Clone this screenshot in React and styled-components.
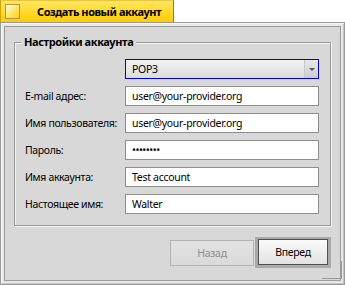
import React from 'react'
import styled, { createGlobalStyle } from 'styled-components'

const Global = createGlobalStyle`
  body {
    margin: 0;
    background: #ffffff;
    font-family: "Noto Sans", "DejaVu Sans", sans-serif;
  }
`

const Window = styled.div`
  position: relative;
  width: 345px;
  height: 285px;
  display: flex;
  flex-direction: column;
`

const TabBar = styled.div`
  height: 22px;
  display: flex;
`

const Tab = styled.div`
  width: 174px;
  box-sizing: border-box;
  display: flex;
  align-items: center;
  gap: 17px;
  padding-left: 4px;
  background: linear-gradient(#ffe660, #ffcc00);
  border-left: 1px solid #c9a600;
  border-right: 1px solid #8a7a40;
  border-top: 1px solid #e8c640;
`

const CloseBox = styled.div`
  width: 15px;
  height: 15px;
  box-sizing: border-box;
  border: 1px solid #b09a40;
  background: linear-gradient(135deg, #fffbe0, #ffd000);
`

const Title = styled.span`
  font-weight: bold;
  font-size: 11px;
  letter-spacing: -0.45px;
  color: #000;
`

const Frame = styled.div`
  flex: 1;
  display: flex;
  border: 1px solid #9a9a9a;
  padding: 3px;
  background: #e8e8e8;
  box-shadow: inset 1px 1px 0 #f8f8f8, inset -1px -1px 0 #c4c4c4;
`

const Content = styled.div`
  flex: 1;
  display: flex;
  flex-direction: column;
  border: 1px solid #9c9c9c;
  background: #d8d8d8;
  padding: 15px 9px 9px 9px;
`

const GroupBox = styled.div`
  position: relative;
  height: 184px;
  box-sizing: border-box;
  border: 1px solid #9a9a9a;
  box-shadow: inset 1px 1px 0 #f2f2f2, 1px 1px 0 #f2f2f2;
  padding: 16px 11px 0 10px;
`

const Legend = styled.span`
  position: absolute;
  top: -9px;
  left: 6px;
  padding: 0 3px;
  background: #d8d8d8;
  font-weight: bold;
  font-size: 11px;
  letter-spacing: -0.4px;
  color: #000;
`

const Form = styled.div`
  display: grid;
  grid-template-columns: 100px 1fr;
  grid-auto-rows: 20px;
  row-gap: 7px;
  align-items: center;
`

const Label = styled.span`
  font-size: 10.5px;
  letter-spacing: -0.35px;
  color: #000;
  line-height: 20px;
`

const Field = styled.div`
  grid-column: 2;
  height: 20px;
  box-sizing: border-box;
  border: 1px solid ${p => (p.$focus ? '#0000e5' : '#8e8e8e')};
  background: ${p => (p.$select ? 'linear-gradient(#f2f2f2, #dcdcdc)' : '#ffffff')};
  display: flex;
  align-items: center;
  padding-left: 6px;
  font-size: 10.5px;
  letter-spacing: -0.3px;
  color: #000;
`

const FieldText = styled.span`
  flex: 1;
  letter-spacing: ${p => (p.$dots ? '-0.5px' : '-0.3px')};
`

const Arrow = styled.div`
  width: 13px;
  align-self: stretch;
  display: flex;
  align-items: center;
  justify-content: center;
  border-left: 1px solid #c8c8c8;
  background: linear-gradient(#e8e8e8, #cccccc);

  &::after {
    content: '';
    border-left: 3px solid transparent;
    border-right: 3px solid transparent;
    border-top: 3px solid #555;
  }
`

const Buttons = styled.div`
  display: flex;
  justify-content: flex-end;
  align-items: center;
  gap: 1px;
  margin-top: 11px;
`

const Button = styled.button`
  width: ${p => (p.$default ? '70px' : '84px')};
  height: 26px;
  box-sizing: border-box;
  border: 1px solid ${p => (p.disabled ? '#b4b4b4' : '#505050')};
  background: ${p => (p.disabled ? 'linear-gradient(#e2e2e2, #dadada)' : 'linear-gradient(#fbfbfb, #e2e2e2)')};
  color: ${p => (p.disabled ? '#8e8e8e' : '#000')};
  font-family: "Noto Sans", "DejaVu Sans", sans-serif;
  font-size: 10.5px;
  letter-spacing: -0.3px;
  padding: 0;
`

const DefaultRing = styled.div`
  padding: 2px 3px 3px 3px;
  background: #a9a9a9;
  display: flex;
`

const ResizeCorner = styled.div`
  position: absolute;
  right: 3px;
  bottom: 6px;
  width: 19px;
  height: 17px;
  border-right: 1px solid #9a9a9a;
  border-bottom: 1px solid #9a9a9a;
  pointer-events: none;
`

const fields = [
  ['E-mail адрес:', 'user@your-provider.org'],
  ['Имя пользователя:', 'user@your-provider.org'],
  ['Пароль:', '••••••••', true],
  ['Имя аккаунта:', 'Test account'],
  ['Настоящее имя:', 'Walter'],
]

export default function App() {
  return (
    <>
      <Global />
      <Window>
        <TabBar>
          <Tab>
            <CloseBox />
            <Title>Создать новый аккаунт</Title>
          </Tab>
        </TabBar>
        <Frame>
          <Content>
            <GroupBox>
              <Legend>Настройки аккаунта</Legend>
              <Form>
                <Field $select $focus>
                  <FieldText>POP3</FieldText>
                  <Arrow />
                </Field>
                {fields.map(([label, value, dots]) => (
                  <React.Fragment key={label}>
                    <Label>{label}</Label>
                    <Field>
                      <FieldText $dots={dots}>{value}</FieldText>
                    </Field>
                  </React.Fragment>
                ))}
              </Form>
            </GroupBox>
            <Buttons>
              <Button disabled>Назад</Button>
              <DefaultRing>
                <Button $default>Вперед</Button>
              </DefaultRing>
            </Buttons>
          </Content>
        </Frame>
        <ResizeCorner />
      </Window>
    </>
  )
}
